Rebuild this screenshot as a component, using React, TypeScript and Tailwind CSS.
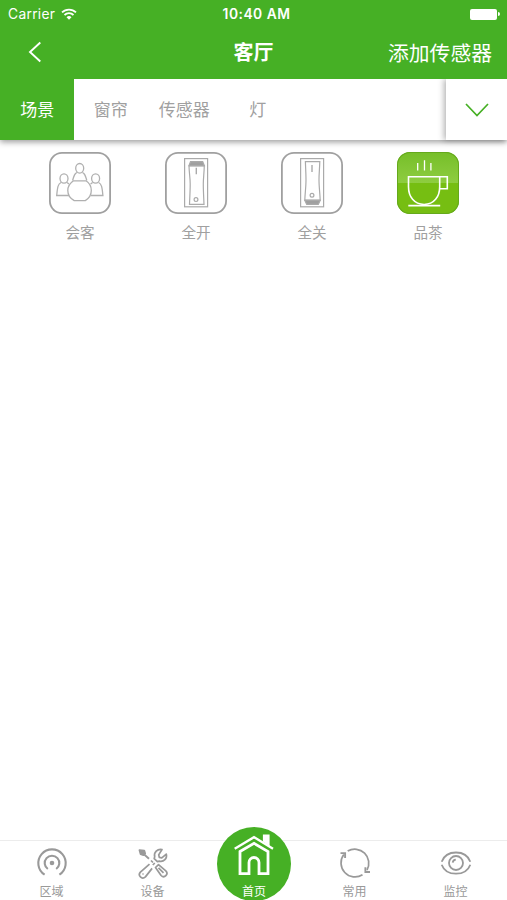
import { useState } from 'react';
import type { ReactNode } from 'react';

const tabs = ['场景', '窗帘', '传感器', '灯'];

function MeetingIcon() {
  return (
    <svg viewBox="0 0 62 62" className="w-full h-full" fill="none" stroke="#b0b0b0" strokeWidth="1.3">
      <ellipse cx="30.7" cy="16.3" rx="4" ry="4.8" />
      <path d="M28 20.5c-2.400 1-3 3-4.400 8M33.400 20.500c2.400 1 3 3 4.400 8" />
      <ellipse cx="15" cy="26.500" rx="4" ry="4.600" />
      <path d="M12 30.500C9 32 8.500 35 7.700 43.500H20M18 30.500l2 1.600" />
      <ellipse cx="46.600" cy="26.500" rx="4" ry="4.600" />
      <path d="M49.600 30.500c3 1.500 3.500 4.500 4.300 13H41.700M43.600 30.500l-2 1.600" />
      <path d="M24.500 28.800h12.500c3 2 5.300 5.700 5.300 9.700 0 5-2.600 8-6 10.100H25.200c-3.800-2.100-6.400-5.100-6.400-10.100 0-4 2.700-7.700 5.700-9.700z" />
    </svg>
  );
}

function SwitchOnIcon() {
  return (
    <svg viewBox="0 0 62 62" className="w-full h-full" fill="none" stroke="#aaaaaa" strokeWidth="1.200">
      <rect x="19.600" y="6.600" width="23" height="48.200" />
      <path d="M24 13.800h15.300c-.2 8-1 12-1 18 0 7 .4 13 .7 20.500H24.500c.3-7.500.7-13.500.7-20.500 0-6-1-10-1.200-18z" />
      <path d="M25.500 9.700h12.200l1.700 4H24z" fill="#a0a0a0" />
      <path d="M31.300 15.700v6.500" strokeWidth="1.400" />
      <circle cx="31" cy="47.600" r="1.900" />
    </svg>
  );
}

function SwitchOffIcon() {
  return (
    <svg viewBox="0 0 62 62" className="w-full h-full" fill="none" stroke="#aaaaaa" strokeWidth="1.200">
      <rect x="19.600" y="6.600" width="23" height="48.200" />
      <path d="M24.400 9.700h14.400c-.2 7-.8 12-.8 18 0 7 .9 13 1.200 20.500H23.800c.3-7.500 1.200-13.500 1.200-20.500 0-6-.4-11-.6-18z" />
      <path d="M23.800 48.300h15.400l-1.900 4H25.700z" fill="#a0a0a0" />
      <path d="M31 13v7" strokeWidth="1.400" />
      <circle cx="31" cy="43.300" r="1.900" />
    </svg>
  );
}

function TeaIcon() {
  return (
    <svg viewBox="0 0 62 62" className="w-full h-full" fill="none" stroke="#ffffff" strokeWidth="1.600">
      <path d="M20.700 11v7.500M27.500 8.300v10.200M33.900 11v7.500" strokeWidth="1.300" />
      <path d="M11.500 24.700h31.200v10c0 10-5.700 17.800-15.600 17.800S11.500 44.700 11.500 34.700z" />
      <path d="M42.700 24.700h7.600v12.100h-7.800" />
      <path d="M11.300 53.600h31.900" />
    </svg>
  );
}

function ZoneIcon() {
  return (
    <svg viewBox="0 0 32 32" className="w-8 h-8" fill="none" stroke="#999999" strokeWidth="2.100">
      <path d="M8.600 27.600A13.700 13.700 0 1 1 23.400 27.600" />
      <path d="M11.800 22A7.300 7.300 0 1 1 20.200 22" />
      <circle cx="16" cy="16" r="2.300" fill="#999999" stroke="none" />
    </svg>
  );
}

function ToolsIcon() {
  return (
    <svg viewBox="0 0 32 32" className="w-8 h-8" fill="none" stroke="#999999" strokeWidth="1.700" strokeLinejoin="round">
      {/* screwdriver */}
      <path d="M2.400 3l4.900.5.9 3-1.800 1.700-2.800-1z" fill="#999999" />
      <path d="M7.200 7.500l4.800 4.300" strokeWidth="1.900" />
      <path d="M14 13.500l2 2M15.800 18l2-2" />
      <path d="M18.500 20.500l3-2.800 7.300 6.100c3.200 3.400-1.400 7.900-4.700 4.700zM21.500 20.800l5 5" />
      {/* wrench */}
      <path d="M25 2.500c-4.500-1-8.500 2.800-7.300 7.200l-.5 1.900 3.200 3 1.900-.5c4.500 1.100 8.100-2.700 7-7l-4.500 3.800-2.500-.6-.6-2.400z" />
      <path d="M12.500 17.100l-9.100 8c-3 3.400 1.500 8 5 4.800l6.700-8.500" />
      <circle cx="6" cy="27" r=".8" fill="#999999" stroke="none" />
    </svg>
  );
}

function HomeIcon() {
  return (
    <svg viewBox="0 0 42 44" className="w-[42px] h-11" fill="none" stroke="#ffffff">
      <path d="M1.700 14.800L21 3.200l19 11.600" strokeWidth="2.300" />
      <path d="M30.500 7.700V1h5.500v11" fill="#ffffff" strokeWidth="1.200" />
      <path d="M7 17.500L21 9.300l14 8.200v22.200h-9V28.500a5 5 0 0 0-10 0v11.200H7z" strokeWidth="2.800" />
    </svg>
  );
}

function CommonIcon() {
  return (
    <svg viewBox="0 0 32 32" className="w-8 h-8" fill="none" stroke="#999999" strokeWidth="1.700">
      <path d="M8.700 4.100A14 14 0 0 1 28 23" />
      <path d="M23.500 27.800A14 14 0 0 1 4.800 7.600" />
      <path d="M1.500 6.100h4.600v4.800" strokeWidth="1.900" />
      <path d="M31 25h-4.600v-4.800" strokeWidth="1.900" />
    </svg>
  );
}

function EyeIcon() {
  return (
    <svg viewBox="0 0 32 32" className="w-8 h-8" fill="none" stroke="#999999" strokeWidth="1.800">
      <path d="M1.700 14.700C4 8.500 9.500 5.500 16 5.500s12 3 14.300 9.200" />
      <path d="M1.700 17.700C4 23.900 9.500 26.700 16 26.700s12-2.800 14.300-9" />
      <circle cx="16" cy="16" r="7" />
      <path d="M12.700 15.700a3.400 3.400 0 0 1 3.100-3" />
    </svg>
  );
}

const scenes: { name: string; icon: ReactNode }[] = [
  { name: '会客', icon: <MeetingIcon /> },
  { name: '全开', icon: <SwitchOnIcon /> },
  { name: '全关', icon: <SwitchOffIcon /> },
  { name: '品茶', icon: <TeaIcon /> },
];

const navItems: { label: string; icon: ReactNode; home?: boolean }[] = [
  { label: '区域', icon: <ZoneIcon /> },
  { label: '设备', icon: <ToolsIcon /> },
  { label: '首页', icon: <HomeIcon />, home: true },
  { label: '常用', icon: <CommonIcon /> },
  { label: '监控', icon: <EyeIcon /> },
];

function StatusBar() {
  return (
    <div className="grid grid-cols-3 items-center h-7 pl-2 pr-[7px] font-[Inter,sans-serif]">
      <div className="flex items-center gap-1.5">
        <span className="text-[13.800px] tracking-[0.300px]">Carrier</span>
        <svg viewBox="0 0 16 12" className="w-4 h-3" fill="none" stroke="currentColor" strokeWidth="1.800">
          <path d="M1 4.400a10 10 0 0 1 14 0M3.500 7a6.400 6.400 0 0 1 9 0" />
          <path d="M5.500 9.200a3.600 3.600 0 0 1 5 0L8 11.700z" fill="currentColor" stroke="none" />
        </svg>
      </div>
      <span className="justify-self-center pl-[5px] text-[13.800px] font-semibold tracking-[0.500px] whitespace-nowrap">10:40 AM</span>
      <div className="flex items-center justify-end gap-px">
        <div className="w-[27px] h-[11px] rounded-[2px] bg-white" />
        <div className="w-[2px] h-1 rounded-r-full bg-white" />
      </div>
    </div>
  );
}

export default function App() {
  const [tab, setTab] = useState(0);
  const [scene, setScene] = useState(3);

  return (
    <div className="flex flex-col w-[507px] h-[900px] overflow-hidden bg-white font-['Noto_Sans_CJK_SC',sans-serif]">
      <header className="h-[79px] shrink-0 bg-[#46b025] text-white">
        <StatusBar />
        <div className="grid grid-cols-3 items-center h-12 pl-7 pr-[15px]">
          <button aria-label="back" className="w-4">
            <svg viewBox="0 0 16 22" className="w-4 h-[22px]" fill="none" stroke="currentColor" strokeWidth="1.900">
              <path d="M12.300 1.500L2 11l10.300 9.500" />
            </svg>
          </button>
          <h1 className="justify-self-center pr-[13px] text-[20px] font-bold leading-none">客厅</h1>
          <button className="justify-self-end text-[20.800px] leading-none whitespace-nowrap">添加传感器</button>
        </div>
      </header>

      {/* Category tabs */}
      <div className="flex h-[61px] shrink-0 bg-white shadow-[0_2px_6px_rgba(0,0,0,0.400)] [clip-path:inset(0_0_-12px_0)]">
        <div className="flex flex-1 overflow-hidden">
          {tabs.map((t, i) => (
            <button
              key={t}
              onClick={() => setTab(i)}
              className={`w-[73.500px] shrink-0 pl-px pb-px text-[17px] ${i === tab ? 'bg-[#46b025] text-white' : 'text-[#a0a0a0]'}`}
            >
              {t}
            </button>
          ))}
        </div>
        <button aria-label="more" className="flex items-center justify-center w-[61px] bg-white shadow-[-2px_0_6px_rgba(0,0,0,0.300)]">
          <svg viewBox="0 0 24 14" className="w-6 h-3.5" fill="none" stroke="#46b025" strokeWidth="1.700">
            <path d="M1 1l11 11.500L23 1" />
          </svg>
        </button>
      </div>

      {/* Scenes */}
      <main className="flex-1 pl-[22px] pr-[21px] pt-3">
        <div className="grid grid-cols-4">
          {scenes.map((s, i) => (
            <button key={s.name} onClick={() => setScene(i)} className="flex flex-col items-center">
              <span
                className={`w-[62px] h-[62px] rounded-[13px] ${
                  i === scene
                    ? 'bg-linear-to-b from-[#76be28] from-0% via-[#8ecd40] via-50% to-[#76be12] to-50% shadow-[inset_0_0_0_1px_#65a91c]'
                    : 'shadow-[inset_0_0_0_1.800px_#a0a0a0]'
                }`}
              >
                {s.icon}
              </span>
              <span className="mt-[7px] text-[14.600px] leading-[22px] text-[#a0a0a0]">{s.name}</span>
            </button>
          ))}
        </div>
      </main>

      {/* Bottom navigation */}
      <nav className="grid grid-cols-5 h-[60px] px-px shrink-0 border-t border-[#ececec]">
        {navItems.map((n) =>
          n.home ? (
            <a key={n.label} href="#home" className="flex flex-col items-center w-[74px] h-[74px] -mt-3.5 ml-px pt-[7px] rounded-full justify-self-center bg-[#46b025] text-white">
              {n.icon}
              <span className="mt-[5px] text-[12px] leading-4">{n.label}</span>
            </a>
          ) : (
            <a key={n.label} href="#nav" className="flex flex-col items-center pt-1.5 text-[#999999]">
              {n.icon}
              <span className="mt-1 text-[12px] leading-4">{n.label}</span>
            </a>
          )
        )}
      </nav>
    </div>
  );
}
